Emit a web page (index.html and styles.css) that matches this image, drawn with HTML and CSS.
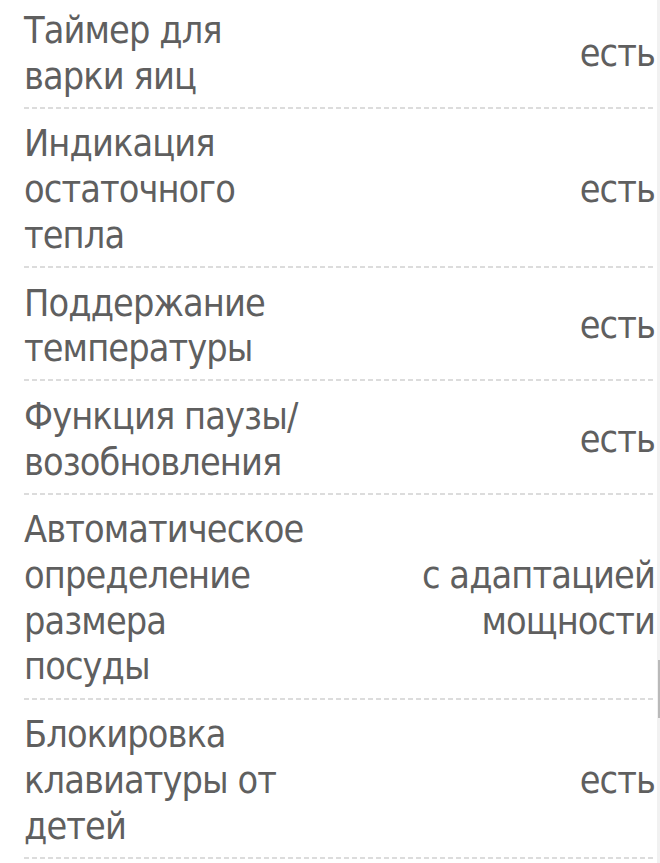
FILE: index.html
```html
<!DOCTYPE html>
<html lang="ru">
<head>
<meta charset="utf-8">
<link rel="stylesheet" href="styles.css">
</head>
<body>
<div class="page">
  <div class="specs">
    <div class="row"><div class="name">Таймер для<br>варки яиц</div><div class="val">есть</div></div>
    <div class="row"><div class="name">Индикация<br>остаточного<br>тепла</div><div class="val">есть</div></div>
    <div class="row"><div class="name">Поддержание<br>температуры</div><div class="val">есть</div></div>
    <div class="row"><div class="name">Функция паузы/<br>возобновления</div><div class="val">есть</div></div>
    <div class="row"><div class="name">Автоматическое<br>определение<br>размера<br>посуды</div><div class="val">с адаптацией<br>мощности</div></div>
    <div class="row"><div class="name">Блокировка<br>клавиатуры от<br>детей</div><div class="val">есть</div></div>
  </div>
  <div class="scrollbar"><div class="thumb"></div></div>
</div>
</body>
</html>
```
FILE: styles.css
```css
html, body {
  margin: 0;
  padding: 0;
  background: #fff;
}
.page {
  position: relative;
  width: 660px;
  height: 863px;
  overflow: hidden;
}
.specs {
  margin-top: -4.5px;
  padding: 0 5px 0 24px;
  font-family: "DejaVu Sans", "Liberation Sans", sans-serif;
  font-stretch: condensed;
  font-size: 37.5px;
  letter-spacing: -0.9px;
  line-height: 45.7px;
  color: #5f5f5f;
}
.row {
  display: grid;
  grid-template-columns: 300px 1fr;
  align-items: center;
  padding: 12.5px 0 9.5px;
  background-image: repeating-linear-gradient(90deg, #dcdcdc 0 5px, transparent 5px 8px);
  background-size: 100% 2px;
  background-repeat: no-repeat;
  background-position: left bottom;
}
.name {
  white-space: nowrap;
}
.val {
  text-align: right;
  white-space: nowrap;
}
.scrollbar {
  position: absolute;
  top: 0;
  right: 0;
  width: 3px;
  height: 863px;
  background: #f1f1f1;
}
.thumb {
  position: absolute;
  top: 660px;
  left: 1px;
  width: 2px;
  height: 58px;
  background: #b9b9b9;
}
```
